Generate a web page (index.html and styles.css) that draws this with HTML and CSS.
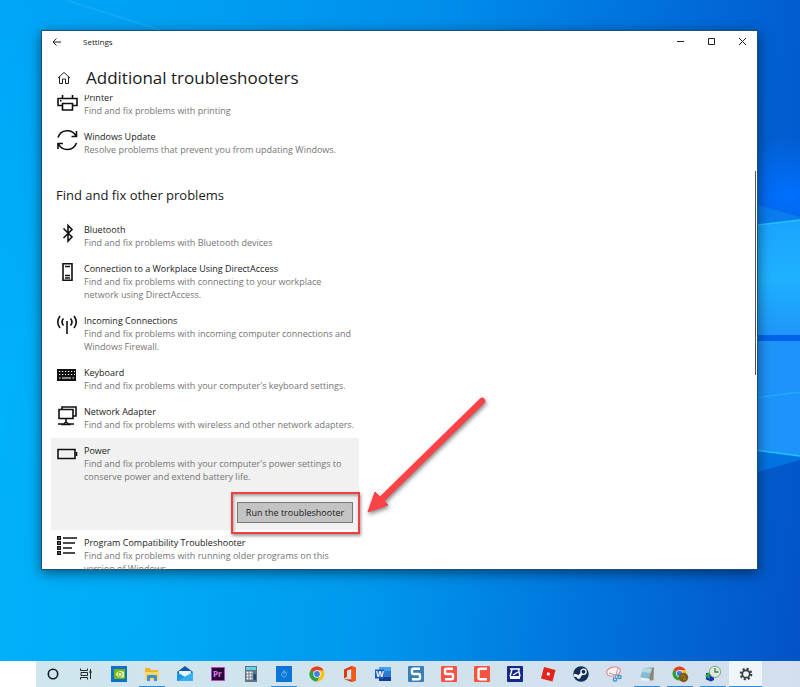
FILE: index.html
```html
<!DOCTYPE html>
<html lang="en">
<head>
  <meta charset="UTF-8" />
  <meta name="viewport" content="width=device-width, initial-scale=1.0" />
  <title>Settings</title>
  <link rel="stylesheet" href="styles.css">
</head>
<body>
  <div class="desktop">
    <svg class="wallpaper" viewBox="0 0 800 687" preserveAspectRatio="none" aria-hidden="true">
      <defs>
        <linearGradient id="pane" x1="0" y1="0" x2="0" y2="1">
          <stop offset="0" stop-color="#1aa3ff" />
          <stop offset=".5" stop-color="#1eb2ff" />
          <stop offset="1" stop-color="#1e96fa" />
        </linearGradient>
        <radialGradient id="glow">
          <stop offset="0" stop-color="#0070ff" />
          <stop offset="1" stop-color="#0070ff" stop-opacity="0" />
        </radialGradient>
      </defs>
      <ellipse cx="790" cy="195" rx="80" ry="60" fill="url(#glow)" />
      <path d="M50 -5L160 30" stroke="#23aefc" stroke-opacity=".5" stroke-width="2" />
      <path d="M740 200L800 217V224L740 228Z" fill="#0a7cf0" />
      <path d="M740 227L800 220V335H740Z" fill="url(#pane)" />
      <path d="M740 341H800V456L740 448Z" fill="#1e94fa" />
      <path d="M740 335H800V341H740Z" fill="#0064ea" />
      <path d="M740 400L800 392" stroke="#1fb4ff" />
      <path d="M740 448L800 456V460L740 477Z" fill="#0274e2" />
      <path d="M740 227L800 220M740 448L800 456" stroke="#22c4fb" stroke-width="1.5" />
    </svg>

    <div class="workspace">
      <main class="window">
        <div class="titlebar">
          <button class="back-button" aria-label="Back">
            <svg width="10" height="10" viewBox="0 0 10 10"><path d="M9 5H1M4.500 1.500L1 5L4.500 8.500" /></svg>
          </button>
          <span class="window-title">Settings</span>
          <div class="window-controls">
            <button aria-label="Minimize"><svg width="9" height="9" viewBox="0 0 9 9"><path d="M1 4.500H8" /></svg></button>
            <button aria-label="Maximize"><svg width="9" height="9" viewBox="0 0 9 9"><path d="M1.500 1.500H7.500V7.500H1.500Z" /></svg></button>
            <button aria-label="Close"><svg width="9" height="9" viewBox="0 0 9 9"><path d="M1 1L8 8M8 1L1 8" /></svg></button>
          </div>
        </div>

        <header class="page-header">
          <svg class="home-icon" width="14" height="14" viewBox="0 0 14 14"><path d="M1 7L7 1.500L13 7M2.500 6V12.500H5.500V8H8.500V12.500H11.500V6" /></svg>
          <h1>Additional troubleshooters</h1>
        </header>

        <div class="scroll-area">
          <div class="content">
            <ul class="list">
              <li class="item">
                <svg class="icon" viewBox="0 0 22 22"><path d="M6.500 8V3M16.500 8V3M6 15.500H2V8.500H21V15.500H17M6.500 13.500H16.500V20H6.500Z" /><path class="solid" d="M4 10h1.500v1.500H4z" /></svg>
                <div class="text"><h3>Printer</h3><p>Find and fix problems with printing</p></div>
              </li>
              <li class="item">
                <svg class="icon" viewBox="0 0 22 22"><path d="M2 8.500A9.800 9.800 0 0 1 20 7M20.500 2V7.500H15.500M20.500 14A9.800 9.800 0 0 1 2.500 15M2 20V14.500H7" /></svg>
                <div class="text"><h3>Windows Update</h3><p>Resolve problems that prevent you from updating Windows.</p></div>
              </li>
            </ul>

            <h2>Find and fix other problems</h2>

            <ul class="list">
              <li class="item">
                <svg class="icon" viewBox="0 0 22 22"><path d="M7.500 6.500L16 15L12 19V3.500L16 7.500L7.500 16" /></svg>
                <div class="text"><h3>Bluetooth</h3><p>Find and fix problems with Bluetooth devices</p></div>
              </li>
              <li class="item">
                <svg class="icon" viewBox="0 0 22 22"><path d="M7 2.800H16V19.200H7Z" /><path class="thin" d="M9 5.500H14M9 14.500H14M9 17H14" /></svg>
                <div class="text"><h3>Connection to a Workplace Using DirectAccess</h3><p>Find and fix problems with connecting to your workplace network using DirectAccess.</p></div>
              </li>
              <li class="item">
                <svg class="icon" viewBox="0 0 22 22"><path d="M11 8V21M4 3Q-.5 9 4 15M18 3Q22.500 9 18 15M7.500 5.500Q4.500 9 7.500 12.500M14.500 5.500Q17.500 9 14.500 12.500" /></svg>
                <div class="text"><h3>Incoming Connections</h3><p>Find and fix problems with incoming computer connections and Windows Firewall.</p></div>
              </li>
              <li class="item">
                <svg class="icon" viewBox="0 0 22 22"><path class="solid" d="M1 4H20V16H1Z" /><path class="keys" d="M3 6.500H19M3 9.500H19" /><path class="keys-space" d="M3 13H4.500M6 13H15M16.500 13H18" /></svg>
                <div class="text"><h3>Keyboard</h3><p>Find and fix problems with your computer's keyboard settings.</p></div>
              </li>
              <li class="item">
                <svg class="icon" viewBox="0 0 22 22"><path d="M6 5V3H20V12H17M3 5.500H17V14.500H3ZM10 14.500V18M2 20H7M13 20H18M7 20.500L10 18L13 20.500Z" /></svg>
                <div class="text"><h3>Network Adapter</h3><p>Find and fix problems with wireless and other network adapters.</p></div>
              </li>
              <li class="item selected">
                <svg class="icon" viewBox="0 0 22 22"><path d="M2 6.500H19V15.500H2Z" /><path d="M20.500 9V13" /></svg>
                <div class="text">
                  <h3>Power</h3>
                  <p>Find and fix problems with your computer's power settings to conserve power and extend battery life.</p>
                  <button class="run-button">Run the troubleshooter</button>
                </div>
                <span class="highlight"></span>
                <svg class="arrow" viewBox="0 0 124 124" aria-hidden="true">
                  <path class="arrow-line" d="M117 7L17 105" />
                  <path class="arrow-head" d="M3 118L10 98L23 111Z" />
                </svg>
              </li>
              <li class="item">
                <svg class="icon" viewBox="0 0 22 22"><path d="M7 3H21M7 8H19M7 13H16M7 18H19" /><path class="solid" d="M1 1h4v4H1zM1 6h4v4H1zM1 11h4v4H1zM1 16h4v4H1z" /><path class="keys" d="M2.500 3h1.200M2.500 8h1.200M2.500 13h1.200M2.500 18h1.200" /></svg>
                <div class="text"><h3>Program Compatibility Troubleshooter</h3><p>Find and fix problems with running older programs on this version of Windows.</p></div>
              </li>
            </ul>
          </div>
          <span class="scroll-thumb"></span>
        </div>
      </main>
    </div>

    <nav class="taskbar">
      <button aria-label="Cortana"><svg viewBox="0 0 18 18"><circle cx="9" cy="9" r="4.700" fill="none" stroke="#151b20" stroke-width="1.600" /></svg></button>
      <button aria-label="Task View"><svg viewBox="0 0 18 18"><path d="M3.500 3.500V5.500H10.500V3.500M3.500 14.500V12.500H10.500V14.500M4 7.500H10.500V10.500H4ZM13.500 4V14" fill="none" stroke="#22282d" /><path d="M12.500 6h2v2h-2z" fill="#22282d" /></svg></button>
      <button aria-label="NVIDIA"><svg viewBox="0 0 18 18"><path d="M1 1h16v16H1z" fill="#0872ce" /><path d="M4 4h11v10H4z" fill="#77b900" /><path d="M5.500 9Q9 4.500 14 7V12Q8 14 5.500 9Z" fill="#e6f3ca" /><circle cx="10" cy="9.300" r="2" fill="none" stroke="#77b900" /></svg></button>
      <button class="running" aria-label="File Explorer"><svg viewBox="0 0 18 18"><path d="M2 3h5l1 2h7v10H2z" fill="#f0b32d" /><path d="M2 7h14v8H2z" fill="#ffd667" /><path d="M4 16V11Q4 10 5 10H13Q14 10 14 11V16H11V13H7V16Z" fill="#3b90d9" /></svg></button>
      <button aria-label="Mail"><svg viewBox="0 0 18 18"><path d="M1 7L9 1L17 7V16H1Z" fill="#0b5ba8" /><path d="M3 6h12v6H3z" fill="#e9f5fb" /><path d="M1 7L9 12L1 16Z" fill="#1797e5" /><path d="M17 7L1 16H17Z" fill="#32b0f0" /></svg></button>
      <button aria-label="Premiere Pro"><svg viewBox="0 0 18 18"><path d="M2.500 2.500h13v13h-13z" fill="#2a0634" stroke="#b34ac4" /><text x="4" y="12" class="logo-text" fill="#e07af5">Pr</text></svg></button>
      <button aria-label="Calculator"><svg viewBox="0 0 18 18"><path d="M3 1h12v16H3z" fill="#66727b" /><path d="M4 2h10v3H4z" fill="#55d5f4" /><path d="M4.500 7.500H11M4.500 10.500H11M4.500 13.500H11" stroke="#fff" stroke-width="2" stroke-dasharray="2 1" /><path d="M11.500 9h2.500v6h-2.500z" fill="#124d83" /></svg></button>
      <button class="running" aria-label="Timer"><svg viewBox="0 0 18 18"><path d="M1 1h16v16H1z" fill="#0b76d5" /><circle cx="9" cy="9.500" r="2.500" fill="none" stroke="#7cc1f5" stroke-width=".7" /><path d="M9 9.500V8M8 6h2M11 6.500l1 1" stroke="#9bd0fa" stroke-width=".7" /></svg></button>
      <button aria-label="Chrome"><svg viewBox="0 0 18 18"><circle cx="9" cy="9" r="7.500" fill="#fbc116" /><path d="M9 9L2.500 5.200A7.500 7.500 0 0 1 15.500 5.200H9Z" fill="#e33b2e" /><path d="M9 9L2.500 5.200A7.500 7.500 0 0 0 9 16.500L12 11Z" fill="#2c9f4b" /><circle cx="9" cy="9" r="3.700" fill="#fff" /><circle cx="9" cy="9" r="2.900" fill="#3d7fe8" /></svg></button>
      <button aria-label="Office"><svg viewBox="0 0 18 18"><path d="M3 4.500L10.500 1L15 2.500V15.500L10.500 17L3 14L10.500 14.500V4L6 5.500V12L3 13.500Z" fill="#dd3b0b" /><path d="M10.500 1L15 2.500V15.500L10.500 17Z" fill="#f25a16" /></svg></button>
      <button aria-label="Word"><svg viewBox="0 0 18 18"><path d="M5 2h12v14H5z" fill="#2b7cd3" /><path d="M5 2h12v4H5z" fill="#41a5ee" /><path d="M5 12h12v4H5z" fill="#103f91" /><path d="M1 4.500h9v9H1z" fill="#185abd" /><text x="2" y="12" class="logo-text" fill="#fff">W</text></svg></button>
      <button aria-label="Snagit"><svg viewBox="0 0 18 18"><rect x="1" y="1" width="16" height="16" rx="1" fill="#3a80b5" /><path d="M13 3.700H6.500Q5 3.700 5 5.200V7.500Q5 9 6.500 9H11.500Q13 9 13 10.500V12.800Q13 14.300 11.500 14.300H5" class="letter-mark" /></svg></button>
      <button aria-label="Snagit Editor"><svg viewBox="0 0 18 18"><rect x="1" y="1" width="16" height="16" rx="1" fill="#f45345" /><path d="M13 3.700H6.500Q5 3.700 5 5.200V7.500Q5 9 6.500 9H11.500Q13 9 13 10.500V12.800Q13 14.300 11.500 14.300H5" class="letter-mark" /></svg></button>
      <button aria-label="Camtasia"><svg viewBox="0 0 18 18"><rect x="1" y="1" width="16" height="16" rx="1" fill="#f45440" /><path d="M14 3.700H7Q5.500 3.700 5.500 5.200V12.800Q5.500 14.300 7 14.300H14" class="letter-mark" /></svg></button>
      <button aria-label="Scanner"><svg viewBox="0 0 18 18"><rect x="1" y="1" width="16" height="16" rx="1" fill="#15298b" /><path d="M4 4H14M6 4.500L4 11.500M12.500 4.500L14 11.500M7 10L12 7" fill="none" stroke="#fff" stroke-width="1.400" /><path d="M4 11h10v3H4z" fill="#fff" /></svg></button>
      <button aria-label="Roblox"><svg viewBox="0 0 18 18"><path d="M5 2L16.500 5L13.500 16.500L2 13.500Z" fill="#e3241d" /><path d="M8.300 7.300L11 8L10.300 10.700L7.600 10Z" fill="#fff" /></svg></button>
      <button aria-label="Steam"><svg viewBox="0 0 18 18"><circle cx="9" cy="9" r="7.700" fill="#122f59" /><path d="M2 10L7 11.500L11 7.500" fill="none" stroke="#fff" stroke-width="2.500" /><circle cx="11.500" cy="6.700" r="2.600" fill="#122f59" stroke="#fff" stroke-width="1.300" /><circle cx="6.700" cy="12" r="2" fill="#e8eef5" /></svg></button>
      <button aria-label="Snipping Tool"><svg viewBox="0 0 18 18"><ellipse cx="8.500" cy="6.500" rx="7" ry="4.500" transform="rotate(-15 8.500 6.500)" fill="#f7f1f3" stroke="#e8777b" /><path d="M4 8L14 11M13 3L10 13" stroke="#96a3ad" /><circle cx="10" cy="14.500" r="1.700" fill="none" stroke="#3b8fd0" stroke-width="1.300" /><circle cx="14.500" cy="12" r="1.700" fill="none" stroke="#3b8fd0" stroke-width="1.300" /></svg></button>
      <button class="running" aria-label="Notepad"><svg viewBox="0 0 18 18"><path d="M6 3L16 2.500L15.500 15L12 16Z" fill="#8b8971" /><path d="M5.500 3L14 3.500L11 14L2 12.500Z" fill="#85bdce" /><path d="M5.500 3L14 3.500L12.500 8L4 7Z" fill="#b4dae3" /><path d="M2 12.500L11 14L13 15.500H4Z" fill="#eef4f5" /></svg></button>
      <button class="running" aria-label="Chrome profile"><svg viewBox="0 0 18 18"><circle cx="8.500" cy="8.500" r="7" fill="#fbc116" /><path d="M8.500 8.500L2.500 5A7 7 0 0 1 14.500 5H8.500Z" fill="#e33b2e" /><path d="M8.500 8.500L2.500 5A7 7 0 0 0 8.500 15.500Z" fill="#2c9f4b" /><circle cx="8.500" cy="8.500" r="3.400" fill="#fff" /><circle cx="8.500" cy="8.500" r="2.700" fill="#3d7fe8" /><circle cx="12.500" cy="12.500" r="4.700" fill="#7c5a18" /><path d="M10 12L12 10L14 12L12 14L15 14.500" fill="none" stroke="#b98428" stroke-width=".8" /></svg></button>
      <button class="running" aria-label="Backup"><svg viewBox="0 0 18 18"><path d="M2 8h8v7l-3 1.500l-5-2z" fill="#1830b6" /><path d="M1 11L5 7L6 14Z" fill="#20b034" /><circle cx="11" cy="6.800" r="5.600" fill="#dfe9e0" stroke="#87a38a" /><path d="M11 3V7H14.500" fill="none" stroke="#32863b" stroke-width="1.300" /></svg></button>
      <button class="running active" aria-label="Settings"><svg viewBox="0 0 18 18"><circle cx="9" cy="9" r="5.300" fill="none" stroke="#343a40" stroke-width="2" stroke-dasharray="2.080 2.080" /><circle cx="9" cy="9" r="3.700" fill="none" stroke="#343a40" stroke-width="1.700" /></svg></button>
    </nav>
  </div>
</body>
</html>
```
FILE: styles.css
```css
* { box-sizing: border-box; }
body { margin: 0; font-family: 'Open Sans', 'Noto Sans', sans-serif; color: #1a1a1a; }
button { border: 0; padding: 0; background: none; font: inherit; color: inherit; }
h1, h2, h3, p, ul { margin: 0; padding: 0; font-weight: 400; }
svg { display: block; flex: none; }

.desktop { position: relative; display: flex; flex-direction: column; height: 100vh; overflow: hidden; background: linear-gradient(rgba(0,80,220,0.14), rgba(0,80,220,0) 60%), linear-gradient(97deg, #00b4fc 0%, #00aaf6 25%, #0098ee 50%, #0074dc 75%, #0352c6 100%); }
.wallpaper { position: absolute; inset: 0; width: 100%; height: 100%; }
.workspace { position: relative; flex: 1; display: flex; min-height: 0; padding: 30px 42px 91px 41px; }

/* settings window */
.window { flex: 1; display: flex; flex-direction: column; min-width: 0; background: #fff; outline: 1px solid #1d4f7c; outline-offset: -1px; box-shadow: 0 3px 12px rgba(0,0,0,0.5); }
.titlebar { display: flex; align-items: center; height: 23px; padding-left: 11px; font-size: 8px; }
.titlebar svg { fill: none; stroke: #222; }
.back-button { width: 10px; height: 10px; }
.window-title { margin-left: 21px; }
.window-controls { display: flex; margin-left: auto; }
.window-controls button { display: flex; align-items: center; justify-content: center; width: 31px; height: 22px; }
.page-header { display: flex; align-items: center; gap: 15px; height: 42px; padding: 8px 16px 0; }
.page-header h1 { font-size: 17px; line-height: 24px; }
.home-icon { fill: none; stroke: #222; }

.scroll-area { position: relative; flex: 1; min-height: 0; overflow: hidden; }
.content { width: 318px; margin-top: -10px; padding-left: 10px; }
.content h2 { margin: 22px 0 12px 5px; font-size: 13px; line-height: 20px; }
.scroll-thumb { position: absolute; top: 76px; right: 2px; width: 1px; height: 204px; background: #555; }

.list { list-style: none; }
.item { position: relative; display: flex; padding: 6px 4px 7px 0; font-size: 9px; line-height: 13px; }
.item h3 { font-size: 9px; }
.item p { color: #757575; }
.text { flex: 1; display: flex; flex-direction: column; }
.icon { width: 22px; height: 22px; margin: -1px 6px -10px 5px; fill: none; stroke: #111; stroke-width: 1.6px; }
.icon .solid { fill: #111; stroke: none; }
.icon .thin { stroke-width: 1.4px; }
.icon .keys { stroke: #fff; stroke-width: 1px; stroke-dasharray: 1.2px 1.8px; }
.icon .keys-space { stroke: #fff; stroke-width: 1px; }

.selected { z-index: 1; background: #f1f1f1; }
.run-button { align-self: flex-end; width: 116px; height: 21px; margin: 19px 2px 0 0; border: 1px solid #777; background: #c3c3c3; font-size: 9px; }
.highlight { position: absolute; right: -1px; bottom: -4px; width: 129px; height: 42px; border: 2px solid #f33f42; box-shadow: 1px 2px 3px rgba(0,0,0,0.4), inset 1px 2px 3px rgba(0,0,0,0.3); }
.arrow { position: absolute; left: 314px; top: -44px; width: 124px; height: 124px; overflow: visible; filter: drop-shadow(1px 2px 2px rgba(0,0,0,0.5)); }
.arrow-line { stroke: #fb4246; stroke-width: 6.5px; stroke-linecap: round; }
.arrow-head { fill: #fb4246; stroke: #fb4246; stroke-width: 1px; }

/* taskbar */
.taskbar { position: relative; display: flex; height: 26px; border-left: 36px solid #fff; background: linear-gradient(90deg, #cfe6ee, #d3dfed); }
.taskbar button { position: relative; display: flex; align-items: center; justify-content: center; width: 33px; }
.taskbar svg { width: 18px; height: 18px; }
.running::after { content: ''; position: absolute; left: 4px; right: 3px; bottom: 0; height: 1px; background: #2c8ddd; }
.taskbar .active { background: #f0f5fa; }
.active::after { left: 0; right: 0; }
.logo-text { font-size: 8px; font-weight: 700; }
.letter-mark { fill: none; stroke: #fff; stroke-width: 2.4px; }
```
